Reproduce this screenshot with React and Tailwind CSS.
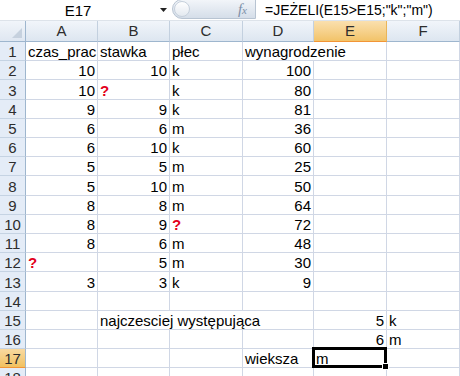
import React from 'react';

const cols = [
  { id: 'A', w: 'w-[72px]' },
  { id: 'B', w: 'w-[72px]' },
  { id: 'C', w: 'w-[73px]' },
  { id: 'D', w: 'w-[71px]' },
  { id: 'E', w: 'w-[73px]' },
  { id: 'F', w: 'w-[73px]' },
];

// wartości arkusza, span = tekst przelewa się na sąsiednie puste komórki
const data = {
  1: { A: 'czas_prac', B: 'stawka', C: 'płec', D: { v: 'wynagrodzenie', span: 2, w: 'w-[144px]' } },
  2: { A: 10, B: 10, C: 'k', D: 100 },
  3: { A: 10, B: '?', C: 'k', D: 80 },
  4: { A: 9, B: 9, C: 'k', D: 81 },
  5: { A: 6, B: 6, C: 'm', D: 36 },
  6: { A: 6, B: 10, C: 'k', D: 60 },
  7: { A: 5, B: 5, C: 'm', D: 25 },
  8: { A: 5, B: 10, C: 'm', D: 50 },
  9: { A: 8, B: 8, C: 'm', D: 64 },
  10: { A: 8, B: 9, C: '?', D: 72 },
  11: { A: 8, B: 6, C: 'm', D: 48 },
  12: { A: '?', B: 5, C: 'm', D: 30 },
  13: { A: 3, B: 3, C: 'k', D: 9 },
  14: {},
  15: { B: { v: 'najczesciej występująca', span: 3, w: 'w-[216px]' }, E: 5, F: 'k' },
  16: { E: 6, F: 'm' },
  17: { D: 'wieksza', E: 'm' },
  18: {},
};

function Cell({ cell, w, selected }) {
  const v = cell && typeof cell === 'object' ? cell.v : cell;
  const isNum = typeof v === 'number';
  const isQ = v === '?';
  return (
    <div
      className={`${w} h-full shrink-0 border-r border-b border-[#d0d7e5] flex items-end whitespace-nowrap relative ${isNum ? 'justify-end' : 'justify-start'}`}
    >
      {v !== undefined && (
        <span className={`leading-[17px] px-[2px] overflow-hidden ${isQ ? 'font-bold text-[#e3001b]' : 'text-black'}`}>
          {v}
        </span>
      )}
      {selected && (
        <div className="absolute z-10 -left-[2px] -top-[2px] -right-[1px] -bottom-[1px] border-[3px] border-black">
          <div className="absolute -right-[5px] -bottom-[5px] w-[7px] h-[7px] bg-black border border-white" />
        </div>
      )}
    </div>
  );
}

function Row({ n }) {
  const row = data[n] || {};
  const tall = n === 3 || n === 8 || n === 13;
  const sel = n === 17;
  const cells = [];
  let skip = 0;
  cols.forEach((c) => {
    if (skip > 0) { skip--; return; }
    const cell = row[c.id];
    if (cell && typeof cell === 'object') {
      skip = cell.span - 1;
      cells.push(<Cell key={c.id} cell={cell} w={cell.w} />);
    } else {
      cells.push(<Cell key={c.id} cell={cell} w={c.w} selected={sel && c.id === 'E'} />);
    }
  });
  return (
    <div className={`flex shrink-0 ${tall ? 'h-[20px]' : 'h-[19px]'}`}>
      <div
        className={`w-[26px] shrink-0 h-full border-r border-r-[#9eb6ce] border-b flex items-end justify-center text-[#2d2d2d] ${sel ? 'bg-linear-to-b from-[#f9d99f] to-[#f1c15f] border-b-[#f29536]' : 'bg-[#e4ecf7] border-b-[#c5d3e3]'}`}
      >
        <span className="leading-[17px]">{n}</span>
      </div>
      {cells}
    </div>
  );
}

export default function App() {
  const rows = Array.from({ length: 18 }, (_, i) => i + 1);
  return (
    <div className="w-[460px] h-[376px] overflow-hidden bg-white font-['Liberation_Sans',Arial,sans-serif] text-[15px] flex flex-col">
      {/* pasek formuły */}
      <div className="h-[21px] shrink-0 flex items-center bg-white border-b border-[#dde3ea]">
        <div className="w-[156px] text-center leading-[19px] text-black">E17</div>
        <div className="w-[14px] flex justify-center">
          <svg width="7" height="4" viewBox="0 0 7 4"><polygon points="0,0 7,0 3.5,4" fill="#222" /></svg>
        </div>
        <div className="ml-[2px] w-[84px] h-[20px] -mt-[2px] rounded-l-full bg-linear-to-b from-[#f2f5f9] to-[#d5dee9] border border-[#b8c4d2] flex items-center">
          <div className="w-[16px] h-[16px] ml-[1px] rounded-full bg-linear-to-b from-white to-[#e3e9f0] border border-[#c6d0dc]" />
          <span className="ml-auto mr-[8px] font-['Liberation_Serif',serif] italic text-[#7d8fa7] leading-[16px]">
            <span className="text-[15px]">f</span><span className="text-[11px]">x</span>
          </span>
        </div>
        <div className="pl-[9px] text-[14px] leading-[19px] text-black whitespace-nowrap">=JEŻELI(E15&gt;E15;"k";"m")</div>
      </div>

      {/* nagłówki kolumn */}
      <div className="h-[21px] shrink-0 flex">
        <div className="w-[26px] shrink-0 h-full border-r border-b border-[#9eb6ce] bg-linear-to-b from-[#f1f5fa] to-[#dfe7f1] flex items-end justify-end pr-[3px] pb-[3px]">
          <svg width="10" height="10" viewBox="0 0 10 10"><polygon points="10,0 10,10 0,10" fill="#c6d1de" /></svg>
        </div>
        {cols.map((c) => (
          <div
            key={c.id}
            className={`${c.w} shrink-0 h-full border-r border-b flex items-center justify-center text-[#2d2d2d] ${c.id === 'E' ? 'bg-linear-to-b from-[#fae0ae] to-[#f2c368] border-r-[#e9b55a] border-b-[#f29536]' : 'bg-linear-to-b from-[#f1f5fa] to-[#dde6f0] border-r-[#c3d0df] border-b-[#9eb6ce]'}`}
          >
            {c.id}
          </div>
        ))}
      </div>

      {rows.map((n) => (
        <Row key={n} n={n} />
      ))}
    </div>
  );
}
